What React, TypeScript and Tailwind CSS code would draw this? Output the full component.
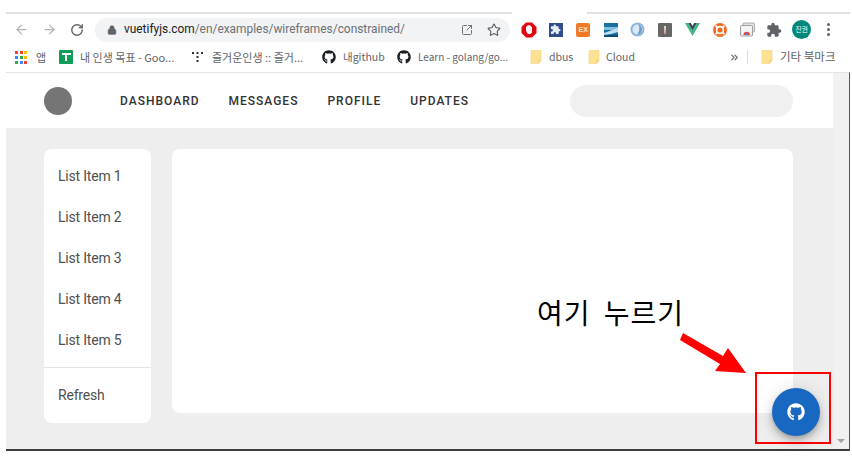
import { ArrowLeft, ArrowRight, RotateCw, Lock, Star, SquareArrowOutUpRight, ChevronsRight } from "lucide-react";
import { FaGithub } from "react-icons/fa";
import { MdExtension } from "react-icons/md";

const navItems = ["DASHBOARD", "MESSAGES", "PROFILE", "UPDATES"];
const listItems = ["List Item 1", "List Item 2", "List Item 3", "List Item 4", "List Item 5"];
const appColors = ["#ea4335", "#ea4335", "#fbbc04", "#4285f4", "#34a853", "#fbbc04", "#34a853", "#4285f4", "#ea4335"];

function Folder() {
  return (
    <svg width="12" height="14" viewBox="0 0 12 14" className="shrink-0">
      <path d="M1 0.5h10v10.5l-2 2.5H1z" fill="#fde293" stroke="#f5d27a" strokeWidth="0.6" />
      <path d="M8.5 13.5v-3h2.5" fill="#fbe7a8" stroke="#e9c46a" strokeWidth="0.6" />
    </svg>
  );
}

function ExtensionIcons() {
  return (
    <div className="flex items-center ml-[5px]">
      {/* 손바닥 */}
      <div className="w-[27.3px] flex justify-center">
        <svg width="16" height="16" viewBox="0 0 16 16">
          <path d="M5 0.5h6L15.5 5v6L11 15.5H5L0.5 11V5z" fill="#e2060f" />
          <path d="M5 8V4.5h1.2V3.5h1.2v-.6h1.4v.8H10v1h1v4.6c0 1.6-1 2.9-2.7 2.9-1.4 0-2.1-.8-2.6-2z" fill="#fff" />
        </svg>
      </div>
      <div className="w-[27.3px] flex justify-center">
        <div className="w-[14px] h-[14px] bg-[#2f4d8c] flex items-center justify-center">
          <MdExtension size={11} color="#e8ecf5" />
        </div>
      </div>
      <div className="w-[27.3px] flex justify-center">
        <div className="w-[14px] h-[14px] rounded-[2px] bg-[#f07a28] flex items-center justify-center text-[7px] leading-none font-bold text-[#fde3cf] font-['Liberation_Sans',sans-serif]">
          EX
        </div>
      </div>
      <div className="w-[27.3px] flex justify-center">
        <svg width="14" height="14" viewBox="0 0 14 14">
          <rect width="14" height="14" fill="#1d6f9f" />
          <rect y="4" width="14" height="3" fill="#7fc0dd" />
          <path d="M0 10 L7 7.5 L14 5 V9 L7 11 L0 12z" fill="#bfe0ee" />
          <rect y="12" width="14" height="2" fill="#0d4a75" />
        </svg>
      </div>
      <div className="w-[27.3px] flex justify-center">
        <svg width="15" height="15" viewBox="0 0 15 15">
          <circle cx="7.5" cy="7.5" r="7" fill="#8fb4dc" />
          <circle cx="7.5" cy="7.5" r="5" fill="#dbe8f5" />
          <path d="M8 2.5c2 2 2 6.5-1 10 3 0 5-2 5-5s-2-5-4-5z" fill="#6f9ccb" />
        </svg>
      </div>
      <div className="w-[27.3px] flex justify-center">
        <div className="w-[14px] h-[14px] rounded-[1px] bg-[#666666] flex justify-center items-center">
          <div className="w-[2px] h-[8px] bg-gradient-to-b from-[#ddd] to-[#d98a7a]" />
        </div>
      </div>
      <div className="w-[27.3px] flex justify-center">
        <svg width="15" height="13" viewBox="0 0 15 13">
          <path d="M0 0h3.2l4.3 7.6L11.8 0H15L7.5 13z" fill="#41b883" />
          <path d="M3.2 0h2.6l1.7 3 1.7-3h2.6L7.5 7.6z" fill="#35495e" />
        </svg>
      </div>
      <div className="w-[27.3px] flex justify-center">
        <svg width="14" height="14" viewBox="0 0 14 14">
          <circle cx="7" cy="7" r="7" fill="#f26b21" />
          <circle cx="7" cy="7" r="3.4" fill="none" stroke="#fff" strokeWidth="1.6" />
          <path d="M2.6 2.6l2.2 2.2M11.4 2.6L9.2 4.8M2.6 11.4l2.2-2.2M11.4 11.4L9.2 9.2" stroke="#fff" strokeWidth="1.8" />
        </svg>
      </div>
      <div className="w-[27.3px] flex justify-center">
        <svg width="15" height="15" viewBox="0 0 15 15">
          <rect x="3" y="1" width="11.5" height="9" rx="1" fill="#e5e5e5" stroke="#9a9a9a" strokeWidth="0.8" />
          <rect x="0.5" y="3.5" width="12" height="10.5" rx="1" fill="#f3f3f3" stroke="#8a8a8a" strokeWidth="0.8" />
          <path d="M3.5 13a3.2 3.2 0 0 1 6.4 0z" fill="#ea4335" />
          <circle cx="6.7" cy="12.2" r="1.3" fill="#4285f4" />
        </svg>
      </div>
      <div className="w-[27.3px] flex justify-center">
        <MdExtension size={16} color="#5f6368" />
      </div>
      <div className="w-[27.3px] flex justify-center">
        <div className="w-[19px] h-[19px] rounded-full bg-[#00897b] flex items-center justify-center text-[7px] leading-none text-white font-['Noto_Sans_CJK_KR',sans-serif]">
          진권
        </div>
      </div>
      <div className="w-[27.3px] flex flex-col items-center gap-[2px]">
        <div className="w-[3px] h-[3px] rounded-full bg-[#5f6368]" />
        <div className="w-[3px] h-[3px] rounded-full bg-[#5f6368]" />
        <div className="w-[3px] h-[3px] rounded-full bg-[#5f6368]" />
      </div>
    </div>
  );
}

function BrowserBar() {
  return (
    <div className="font-['Noto_Sans_CJK_KR',sans-serif]">
      {/* 탭 아래 선 */}
      <div className="h-[12px]" />
      <div className="flex h-[2px]">
        <div className="w-[506px] bg-[#dee1e6]" />
        <div className="w-[75px]" />
        <div className="flex-1 bg-[#dee1e6]" />
      </div>

      {/* 주소창 */}
      <div className="h-[30px] flex items-center pt-[1px]">
        <div className="flex items-center w-[89px] pl-[8px] gap-[13px] text-[#b0b4b9]">
          <ArrowLeft size={15} strokeWidth={2} />
          <ArrowRight size={15} strokeWidth={2} />
          <RotateCw size={14} strokeWidth={2.4} className="text-[#5f6368]" />
        </div>
        <div className="w-[415px] h-[24px] rounded-full bg-[#f1f3f4] flex items-center pl-[12px] pr-[9px]">
          <Lock size={10} fill="#5f6368" color="#5f6368" strokeWidth={2} className="shrink-0" />
          <div className="ml-[7px] text-[11.9px] leading-none text-[#6e7175] font-['Roboto',sans-serif]">
            <span className="text-[#202124]">vuetifyjs.com</span>/en/examples/wireframes/constrained/
          </div>
          <div className="ml-auto flex items-center gap-[14px] text-[#5f6368]">
            <SquareArrowOutUpRight size={12} strokeWidth={1.8} />
            <Star size={14} strokeWidth={2} />
          </div>
        </div>
        <ExtensionIcons />
      </div>

      {/* 북마크 */}
      <div className="h-[28px] pb-[2px] flex items-center text-[11px] leading-none text-[#5f6368]">
        <div className="ml-[9px] w-[12px] h-[12px] grid grid-cols-3 gap-[2px] shrink-0">
          {appColors.map((c, i) => (
            <div key={i} className="w-[3px] h-[3px]" style={{ background: c }} />
          ))}
        </div>
        <span className="ml-[9px] w-[14px]">앱</span>
        <div className="w-[14px] h-[14px] rounded-[1px] bg-[#0f9d58] ml-[9px] flex justify-center pt-[3px] shrink-0">
          <div className="relative w-[9px] h-[2px] bg-white">
            <div className="absolute left-[3.5px] top-0 w-[2px] h-[8px] bg-white" />
          </div>
        </div>
        <span className="ml-[7px] w-[112px] whitespace-nowrap">내 인생 목표 - Goo...</span>
        <svg width="11" height="10" viewBox="0 0 11 10" className="shrink-0" fill="#333">
          <rect x="0" y="0" width="2" height="2" />
          <rect x="4.5" y="0" width="2" height="2" />
          <rect x="9" y="0" width="2" height="2" />
          <rect x="4.5" y="4" width="2" height="2" />
          <rect x="4.5" y="8" width="2" height="2" />
        </svg>
        <span className="ml-[9px] w-[110px] whitespace-nowrap">즐거운인생 :: 즐거...</span>
        <FaGithub size={14} color="#1b1f23" className="shrink-0" />
        <span className="ml-[7px] w-[54px] text-[10.5px] whitespace-nowrap">내github</span>
        <FaGithub size={14} color="#1b1f23" className="shrink-0" />
        <span className="ml-[7px] w-[106px] text-[10px] whitespace-nowrap">Learn - golang/go...</span>
        <span className="w-[6px]" />
        <Folder />
        <span className="ml-[7px] w-[39px] text-[10.5px]">dbus</span>
        <Folder />
        <span className="ml-[6px] w-[28px] text-[10.5px]">Cloud</span>
        <ChevronsRight size={11} strokeWidth={2.4} className="ml-[95px] shrink-0 text-[#5f6368]" />
        <div className="ml-[7px] w-px h-[14px] bg-[#dadce0] shrink-0" />
        <span className="w-[13px] shrink-0" />
        <Folder />
        <span className="ml-[7px] whitespace-nowrap text-[11.5px]">기타 북마크</span>
      </div>
    </div>
  );
}

export default function App() {
  return (
    <div className="relative w-[852px] h-[458px] bg-white overflow-hidden pl-[6px] pr-[2px] font-['Roboto',sans-serif]">
      <BrowserBar />

      <div className="h-[379px] flex border-t border-t-[#e4e5e7] border-b-2 border-b-[#3c3c3c] border-r border-r-[#555555]">
        {/* 페이지 */}
        <div className="w-[827px] flex flex-col bg-[#eeeeee]">
          <header className="h-[55px] bg-white flex items-center pl-[38px] shrink-0">
            <div className="w-[28px] h-[28px] rounded-full bg-[#757575]" />
            <nav className="ml-[48px] flex gap-[29px] text-[12px] font-medium tracking-[1px] text-[#333333]">
              {navItems.map((item) => (
                <span key={item}>{item}</span>
              ))}
            </nav>
            <div className="ml-auto mr-[40px] w-[223px] h-[32px] rounded-full bg-[#f0f0f0]" />
          </header>

          <main className="flex gap-[21px] pl-[38px] pt-[21px]">
            <aside className="w-[107px] h-[274px] rounded-[8px] bg-white pt-[7px] text-[14px] tracking-[-0.2px] text-[#505050] shrink-0">
              {listItems.map((item) => (
                <div key={item} className="h-[41px] pl-[14px] flex items-center">
                  {item}
                </div>
              ))}
              <div className="mt-[6px] h-px bg-[#e3e3e3]" />
              <div className="h-[55px] pl-[14px] flex items-center">Refresh</div>
            </aside>
            <section className="w-[621px] h-[264px] rounded-[8px] bg-white" />
          </main>
        </div>

        {/* 스크롤바 */}
        <div className="flex-1 bg-[#f1f1f1] flex flex-col justify-end items-center pb-[6px]">
          <div className="w-0 h-0 border-l-[4px] border-r-[4px] border-t-[4px] border-l-transparent border-r-transparent border-t-[#a3a3a3]" />
        </div>
      </div>

      {/* 주석 */}
      <div className="absolute left-[537px] top-[293px] text-[28px] leading-[38px] text-black whitespace-nowrap font-['Noto_Sans_CJK_KR',sans-serif] tracking-[1px] [word-spacing:6px]">
        여기 누르기
      </div>
      <svg className="absolute left-[678px] top-[331px]" width="70" height="46" viewBox="0 0 70 46">
        <path d="M2 9 L5 2 L45 25 L50 17 L68 42 L37 40 L42 33 Z" fill="#ff0000" />
      </svg>
      <div className="absolute left-[755px] top-[372px] w-[76px] h-[72px] border-2 border-[#ff0000]" />
      <button className="absolute left-[772px] top-[388px] w-[48px] h-[48px] rounded-full bg-[#1867c0] flex items-center justify-center shadow-[0_3px_5px_-1px_rgba(0,0,0,0.2),0_6px_10px_0_rgba(0,0,0,0.14),0_1px_18px_0_rgba(0,0,0,0.12)]">
        <FaGithub size={18} color="#ffffff" />
      </button>
    </div>
  );
}
